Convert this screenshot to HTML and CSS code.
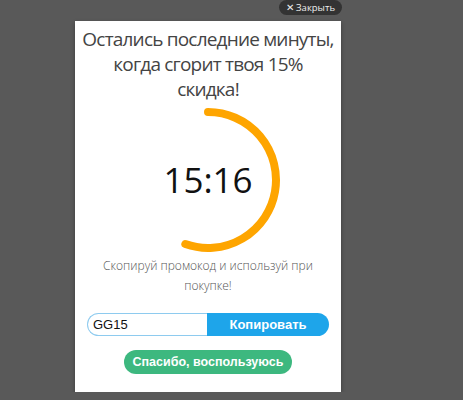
FILE: index.html
```html
<!DOCTYPE html>
<html lang="ru">
<head>
<meta charset="UTF-8">
<meta name="viewport" content="width=device-width, initial-scale=1.0">
<title>Скидка 15%</title>
<link rel="stylesheet" href="styles.css">
</head>
<body>

<div class="popup">
    <button class="close">&#10005; Закрыть</button>
    <h1 class="title">Остались последние минуты,<br>когда сгорит твоя 15%<br>скидка!</h1>

    <div class="timer">
        <svg width="146" height="146" viewBox="0 0 146 146">
            <path d="M73 5 A68 68 0 1 1 50.3 137.1" fill="none" stroke="#fea500" stroke-width="8" stroke-linecap="round"/>
        </svg>
        <div class="time" id="time">15:16</div>
    </div>

    <p class="hint">Скопируй промокод и используй при покупке!</p>

    <div class="promo">
        <input class="code" id="code" type="text" value="GG15" readonly>
        <button class="copy" onclick="copyCode()">Копировать</button>
    </div>

    <button class="thanks">Спасибо, воспользуюсь</button>
</div>

<script>
    function copyCode() {
        const field = document.getElementById('code');
        field.select();
        document.execCommand('copy');
    }
</script>

</body>
</html>
```

FILE: styles.css
```css
body {
    margin: 0;
    background: #595959;
    font-family: "Open Sans", "Liberation Sans", sans-serif;
}
.popup {
    position: relative;
    width: 266px;
    height: 371px;
    margin: 21px 0 0 75px;
    box-sizing: border-box;
    padding-top: 6px;
    background: #fff;
    box-shadow: 0 2px 4px rgba(0, 0, 0, 0.35);
    text-align: center;
}
.close {
    position: absolute;
    top: -21px;
    right: -1px;
    height: 15px;
    padding: 0 7px;
    border: none;
    border-radius: 8px;
    background: #333;
    color: #eee;
    font-family: "Open Sans", sans-serif;
    font-size: 9.5px;
    line-height: 15px;
    cursor: pointer;
}
.title {
    margin: 0;
    white-space: nowrap;
    font-size: 19px;
    font-weight: 400;
    letter-spacing: -0.8px;
    line-height: 25px;
    color: #444;
}
.timer {
    position: relative;
    width: 146px;
    height: 146px;
    margin: 5px auto 0;
}
.timer svg {
    display: block;
}
.time {
    position: absolute;
    top: 0;
    left: 0;
    right: 0;
    line-height: 146px;
    font-size: 35px;
    color: #111;
}
.hint {
    margin: 3px 12px 0;
    font-size: 12px;
    font-weight: 300;
    line-height: 20px;
    color: #555;
}
.promo {
    display: flex;
    width: 242px;
    height: 23px;
    margin: 17px 0 0 12px;
}
.code {
    width: 120px;
    box-sizing: border-box;
    margin: 0;
    padding: 0 5px;
    border: 1px solid #8ecbef;
    border-right: none;
    border-radius: 12px 0 0 12px;
    font-family: "Liberation Sans", sans-serif;
    font-size: 13px;
    color: #111;
    outline: none;
}
.copy {
    flex: 1;
    border: none;
    border-radius: 0 12px 12px 0;
    background: #1ea5ea;
    color: #fff;
    font-family: "Liberation Sans", sans-serif;
    font-size: 13px;
    font-weight: bold;
    cursor: pointer;
}
.thanks {
    display: block;
    height: 24px;
    margin: 14px auto 0;
    padding: 0 9px;
    border: none;
    border-radius: 12px;
    background: #3db87f;
    color: #fff;
    font-family: "Liberation Sans", sans-serif;
    font-size: 12.5px;
    font-weight: bold;
    cursor: pointer;
}
```
